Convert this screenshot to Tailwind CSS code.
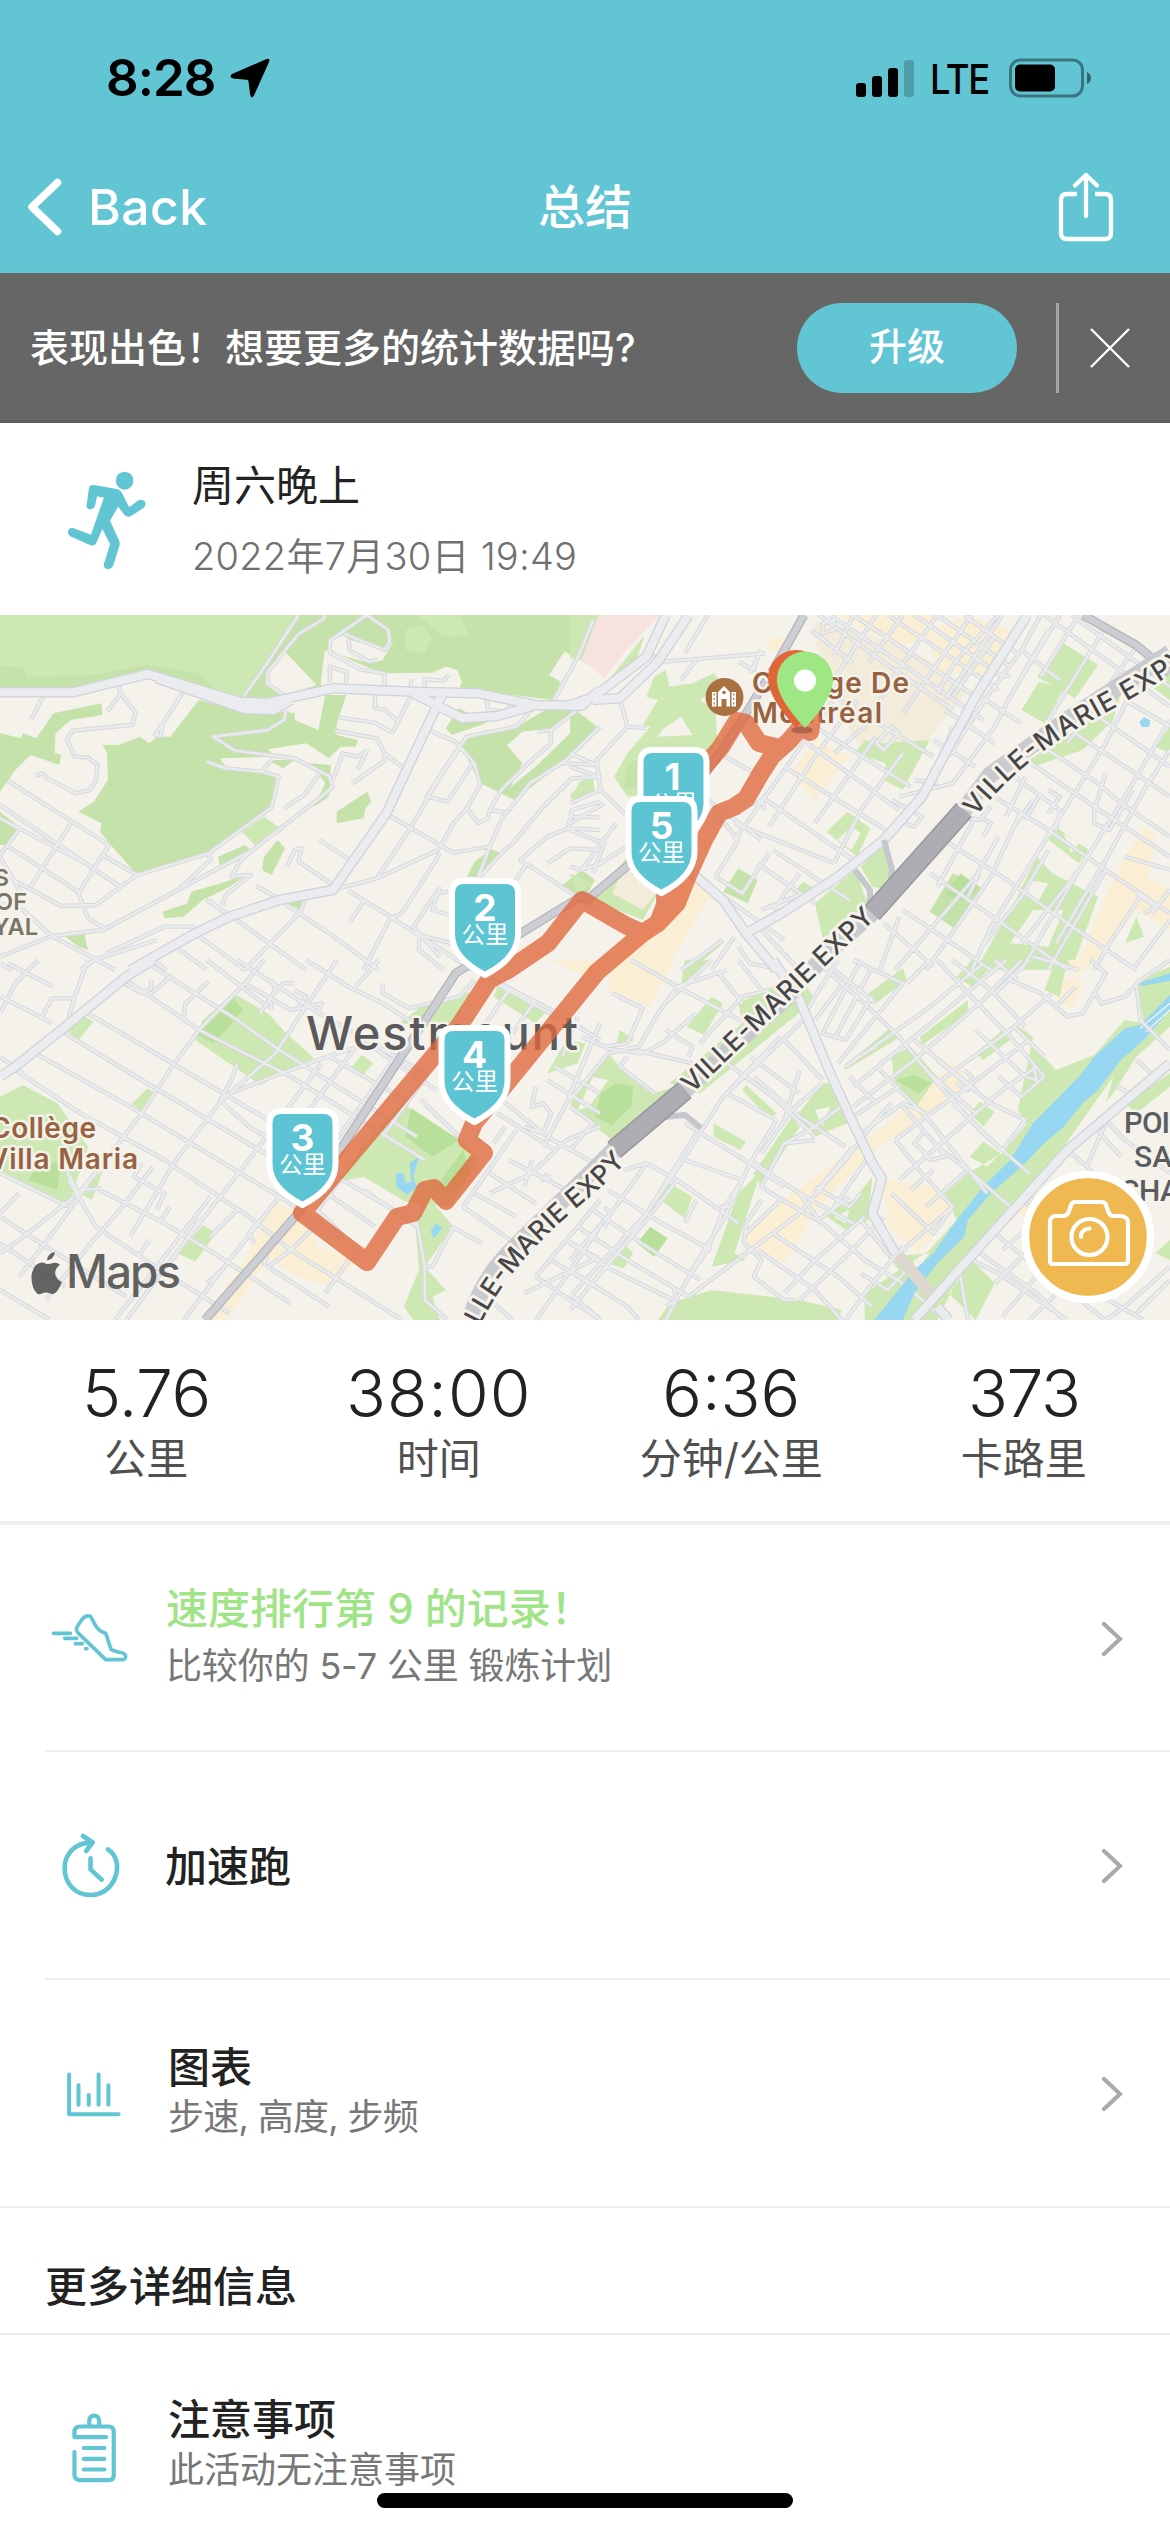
<!DOCTYPE html>
<html lang="zh-CN">
<head>
<meta charset="utf-8">
<meta name="viewport" content="width=1170">
<title>总结</title>
<script src="https://cdn.jsdelivr.net/npm/@tailwindcss/browser@4"></script>
</head>
<body class="w-[1170px] h-[2532px] overflow-hidden bg-white text-[#222] font-['Inter','Noto_Sans_CJK_SC',sans-serif]">
<div class="relative flex flex-col w-[1170px] h-[2532px] overflow-hidden">

<header class="h-[273px] shrink-0 bg-[#62c5d4] flex flex-col">
  <div class="h-[154px] flex items-center justify-between pl-[106px] pr-[78px] pt-[2px] text-black">
    <div class="flex items-center gap-[14px]">
      <span class="text-[51px] leading-[60px] font-semibold tracking-[-1px]">8:28</span>
      <svg class="w-[42px] h-[42px]" viewBox="0 0 42 42"><path d="M37 2.200Q41.500 .500 40 5L25 38.500Q22.600 42.500 21.200 38L19.500 24.500Q19.300 22.800 17.500 22.700L4 21.500Q-.5 20 3 17Z"/></svg>
    </div>
    <div class="flex items-center">
      <svg class="w-[60px] h-[40px]" viewBox="0 0 60 40"><rect x="1" y="25" width="10" height="14" rx="3"/><rect x="17" y="18" width="10" height="21" rx="3"/><rect x="33" y="10" width="10" height="29" rx="3"/><rect x="49" y="2" width="10" height="37" rx="3" opacity=".2"/></svg>
      <span class="ml-[15px] text-[41px] leading-[50px] font-medium tracking-[-1.6px] relative top-[1px] [transform-origin:left] scale-x-[.89] w-[64px]">LTE</span>
      <svg class="ml-[14px] w-[84px] h-[40px]" viewBox="0 0 84 40"><rect x="2.500" y="2" width="72" height="36" rx="10" fill="none" stroke="#000" stroke-opacity=".4" stroke-width="3"/><rect x="7" y="6.500" width="40" height="27" rx="5"/><path d="M79 14Q83 16 83 20T79 26Z" opacity=".5"/></svg>
    </div>
  </div>
  <div class="h-[119px] grid grid-cols-3 items-center text-white pl-[26px] pr-[54px] pb-[14px]">
    <div class="flex items-center gap-[25px]">
      <svg class="w-[37px] h-[60px]" viewBox="0 0 37 60" fill="none" stroke="#fff" stroke-width="7.500" stroke-linecap="round" stroke-linejoin="round"><path d="M31.500 5.500 6 30 31.500 54.500"/></svg>
      <span class="text-[50px] leading-[60px] font-medium tracking-[.4px]">Back</span>
    </div>
    <h1 class="text-center text-[47px] leading-[60px] font-medium pl-[28px]">总结</h1>
    <svg class="justify-self-end w-[60px] h-[72px]" viewBox="0 0 60 72" fill="none" stroke="#fff" stroke-width="4.300" stroke-linecap="round" stroke-linejoin="round"><path d="M21 23H11Q5 23 5 29V62Q5 68 11 68H49Q55 68 55 62V29Q55 23 49 23H39" stroke-linecap="butt"/><path d="M30 45V4M19 14.500 30 4 41 14.500"/></svg>
  </div>
</header>

<section class="h-[150px] shrink-0 bg-[#666] border-b-[3px] border-[#5d5d5d] flex items-center text-white pt-[2px]">
  <p class="ml-[30px] w-[767px] text-[39px] leading-[48px] font-medium whitespace-nowrap">表现出色！想要更多的统计数据吗?</p>
  <button class="w-[220px] h-[90px] rounded-full bg-[#62c5d4] text-[38px] leading-[48px] font-medium pb-[4px]">升级</button>
  <div class="ml-[39px] w-[3px] h-[90px] bg-[#a5a5a5]"></div>
  <svg class="ml-[29px] w-[44px] h-[44px]" viewBox="0 0 44 44" stroke="#fff" stroke-width="2.400"><path d="M3 3 41 41M41 3 3 41"/></svg>
</section>

<section class="h-[192px] shrink-0 flex">
  <svg class="ml-[61px] mt-[37px] w-[92px] h-[120px]" viewBox="160 123 240 360" preserveAspectRatio="none" fill="#62c5d4">
    <ellipse cx="326" cy="185" rx="23" ry="27"/>
    <path d="M236 200Q242 196 250 199L305 210Q315 212 320 224L338 265 362 244Q374 238 380 250 382 260 375 267L342 292Q332 296 326 288L309 263 288 305 312 366Q314 374 312 382L296 440Q288 455 275 448 271 444 272 434L288 376 268 330 252 372Q247 382 237 379L184 352Q174 342 181 330 187 324 197 329L238 347 272 236 254 232 249 260Q242 275 230 269 226 265 227 258L233 208Q234 202 236 200Z"/>
  </svg>
  <div class="ml-[39px] mt-[39px]">
    <h2 class="text-[42px] leading-[48px]">周六晚上</h2>
    <p class="mt-[22px] text-[38px] leading-[48px] font-[340] text-[#707070] tracking-[.25px] whitespace-nowrap">2022年7月30日 19:49</p>
  </div>
</section>

<section class="h-[705px] shrink-0">
<svg class="block w-[1170px] h-[705px]" viewBox="0 0 1170 705">
<defs>
  <g id="streetsA" transform="translate(0 -5) scale(.38265 .33333)">
    <path vector-effect="non-scaling-stroke" d="M780 15 695 165 630 270M850 15 845 28 780 72 700 185 698 220 745 258M958 15 862 92 862 128 940 178 1005 190V232M958 15 1015 60 1018 95 1005 120 900 72M910 88 915 122 965 155 990 150M862 218V170L905 185V220M1072 235 1075 208M1108 235 1110 208 1160 212 1172 195M1550 30 1515 130 1447 272M112 260 82 328M310 225 315 250 280 305M315 250 355 310 345 345 190 362 175 388 195 440 230 442 255 465 250 515 235 540 198 550 120 502 110 490 92 498M478 248 405 375 420 378 425 345M20 512 285 705 268 735 358 795 545 730 710 592 728 500 685 485 590 475 540 455M0 585 320 835M0 625 240 770M185 640 80 830M55 650 0 735M268 735 205 850 230 925 278 958M15 705 155 808 210 850M0 740 60 860M358 795 250 885 160 888 35 810M748 300 742 330 700 360 557 380 615 422 770 445 860 498 870 530 835 565 660 720 270 960 135 978 0 1040M685 485 712 447M835 490 795 555 742 595M870 510 895 430 935 440 960 420M960 420 935 478M1005 430V452L920 520M545 732 550 750 470 835M660 720 630 750 605 800 655 795 590 855 580 888M750 770 770 720 788 715 780 755 865 820M835 690 915 750M670 828 735 870M980 248V295L1005 298 1040 335M885 322 980 338 1025 368M875 362 985 385 1005 430 1055 475M1075 255 1025 370M1010 612 1185 728 1280 710M870 840 985 805 1075 650 1150 500 1198 420M910 842 1020 920 1235 1080M950 875 915 935M730 870 860 970 990 1080M538 870 600 915 800 1080M1125 362 1190 395 1240 460 1255 525 1220 595 1185 640 1145 720 985 805M1220 595 1250 640 1275 625 1280 600 1325 608M1400 285 1350 350 1220 380 1165 470 1115 560 1170 575 1235 460M1520 290 1440 360 1440 400 1380 460 1310 540 1280 600M1405 365 1440 360M1568 350 1480 450 1385 520 1310 630 1280 710 1250 800M1470 460 1568 465M1568 500 1495 505 1420 590 1340 700 1310 730 1255 800M1485 620 1568 622M1568 575 1495 600 1485 650M1568 660 1485 655 1430 680 1360 750 1380 765M1360 750 1568 905M1375 765 1330 840M1568 720 1490 715 1430 760M800 860 785 905 640 1080M600 920 545 870M130 975 250 1048 410 990M135 978 60 900 0 880M250 1048 210 1080M250 1048 300 1080M430 950 510 950M430 950 278 1030M510 970 640 1080M465 1015 540 1080M400 1050 435 1080M1050 910 1150 730M1050 910 1020 925 950 1080M1170 845 1140 850 1080 950 1150 1040M1180 1000 1095 975V1020L1160 1080M1270 265 1275 300 1320 305 1340 280M1150 830 1130 900 1175 915M0 1060 30 1080"/>
  </g>
  <g id="streetsB" transform="translate(570 -5) scale(.38265 .33333)">
    <path vector-effect="non-scaling-stroke" d="M200 125 245 155 410 140 510 130M330 150 290 210M360 15 300 130M440 155 480 180 490 140M500 120 470 190M130 265 150 350 70 450 80 540 160 630M150 350 200 355M0 430 70 465M0 470 75 500M80 540 0 580M90 580 0 640M120 640 30 780 0 770M0 660 90 700 60 790M160 700 80 760 30 780M650 15 800 140 1000 300M680 15 1080 330M740 15 1060 260M830 15 1120 240M900 15 1130 200M960 15 1150 170M1030 15 1170 130M740 15 690 140M800 15 700 190 690 240M870 15 780 160M960 15 840 210 770 350 690 430M1050 15 900 260 870 310M1110 80 1000 260M1130 15 980 270M630 60 740 160M660 40 690 30 690 60 660 70ZM690 260 950 440M640 350 890 530M700 250 560 480 430 690M750 270 640 440 520 650M800 380 640 640M870 430 760 600 690 760M620 400 860 600M560 470 840 670M500 560 740 750M430 640 690 760M350 560 500 690M480 590 500 570 510 600M390 430 500 500M800 400 840 350 860 370 820 420ZM330 800 560 990M390 620 440 690 380 800M520 730 450 850 380 800M600 790 530 900M500 900 610 850M530 720 730 870M490 760 640 880M430 980 370 1080M400 990 290 1080M440 1010 470 1060 560 1080M500 960 600 1080M1230 15 1180 120 1280 210M1180 120 1090 260 1000 420M1280 15 1160 240 1110 350 1000 520 860 560M1060 250 1180 340M980 300 1110 400M950 390 1060 470M900 510 960 520M840 570 920 620 900 650 850 630M1240 15 1568 290M1310 15 1568 230M1000 350 970 450 1010 420M1090 180 1150 200M1250 60 1140 280M1330 15 1230 200M1400 50 1250 330M1480 110 1300 400M1080 540 1250 660 1400 780 1568 910M1180 440 1370 590 1568 740M1150 490 1280 600 1270 660M1250 420 1380 520 1440 580 1568 680M1320 370 1568 560M1380 320 1568 470M1450 270 1568 350M1470 240 1400 400 1270 640 1100 950 1050 1080M1568 330 1450 560 1320 800 1180 1080M1568 420 1500 540 1400 750 1270 1000M1230 550 1190 630M1250 540 1280 560 1250 610M1190 500 1140 620M1210 570 1160 650M1400 490 1370 600 1370 640 1410 660 1470 540M1070 620 1100 640 1080 680M1010 620 1070 630 1100 590M1060 620 960 830M990 700 1130 800 1300 940 1480 1080M940 790 1080 900 1300 1080M870 900 1050 1040 1100 1080M820 940 950 1070M1120 680 1060 800 940 960 850 1080M1180 600 1100 800 980 1000 930 1080M1250 720 1180 860 1070 1020M1330 780 1180 1000M1568 780 1450 740M1480 850 1530 890 1500 910M1490 860 1410 1000 1370 1080M1568 930 1470 1080M1400 780 1250 1080M1210 1040 1330 1080M1070 790 1040 860M1568 840 1520 910M860 920 810 1080M1120 15 1010 150 960 250"/>
  </g>
  <g id="streetsC" transform="translate(0 345) scale(.38265 .33333)">
    <path vector-effect="non-scaling-stroke" d="M100 0 40 70 0 160M20 10 140 80M230 0 195 110 175 190M195 115 135 115 110 170M0 110 80 155 135 190M310 60 370 100 395 85 395 60M395 100 450 45M545 65 485 130 480 175M330 60 520 210 760 350 1110 600M400 20 620 180 730 270 1090 530M230 160 480 330 790 540M170 220 370 360 780 640 980 800M100 285 340 440 730 710 890 830M40 330 210 460 430 600M0 290 60 340M690 0 640 70 520 210 450 320 370 460 250 640 150 800 50 950M540 0 700 140M620 0 820 150 910 210 1110 340M640 70 760 150 840 130 830 160M710 60 720 90 680 160M710 150 705 115 740 70 770 70M770 90 800 110 780 140M800 0 910 80 1000 130 1080 190M880 0 840 70 770 190 720 280 580 420 460 600M620 310 605 360 575 420 650 500 800 600M580 410 690 360 830 300 960 250M960 250 1010 290 1140 390M860 290 1060 420M1000 70 1000 100 1070 145 1200 110 1240 60M990 0 930 80M1040 280 960 410 860 570M1120 340 1000 530M930 260 750 540M840 310 650 600 460 880 330 1080M730 710 600 900 480 1080M400 620 320 740 230 860 120 1020M460 600 340 830M550 710 490 800 410 920 300 1080M370 610 350 650 430 700 410 750M430 600 650 770 760 870 900 970 1050 1080M260 690 430 790 560 880 760 1030M180 660 200 700 250 800 420 930 600 1060M210 690 265 685M160 600 205 700 255 630M205 700 50 840 0 880M0 640 180 740M0 770 120 860 330 1010M0 850 170 980M50 700 0 760M445 740 415 790M520 780 450 900M390 840 360 890M620 750 550 830M680 780 650 820 665 850M740 800 700 870 690 920M760 870 700 920M840 780 760 870M930 870 850 1000M700 920 860 1040M580 930 540 970M880 650 1090 790 1110 920 1110 1020 1170 1080M950 690 1090 800M1185 800 1130 920 1110 920M890 660 830 750 900 830M1240 30 1440 150 1568 240M1280 60 1500 200M1330 90 1270 190M1400 120 1340 220M1400 380 1390 440 1420 430 1440 460 1420 520 1370 500M1290 400 1430 530 1568 620M1300 460 1450 570M1320 500 1290 550M1430 360 1568 460M1450 320 1568 400M1510 170 1470 290M1568 190 1480 430 1420 560M1568 500 1480 540 1390 640 1280 700M1330 600 1480 690M1280 640 1400 730M1240 700 1350 770M1210 740 1370 870M1180 800 1260 850M1350 510 1210 740M1430 640 1420 660 1440 650M1390 600 1370 680M1400 950 1568 1080M1400 950 1568 720M1370 1000 1568 890M1440 900 1568 990M1480 840 1568 900M1310 920 1240 1060M1280 1020 1340 1080M1568 800 1450 1000 1400 1080M1100 420 1200 530M0 990 130 1080"/>
  </g>
  <g id="streetsD" transform="translate(570 345) scale(.38265 .33333)">
    <path vector-effect="non-scaling-stroke" d="M110 100 190 145 150 250 90 260 30 230M90 265 190 280 240 250 330 160M160 0 280 80 230 160 180 260 100 280 0 420M370 0 240 140M410 30 280 80M280 80 460 190M250 210 320 260 310 290M170 270 320 310M150 290 130 320 220 400M340 250 450 110 520 90M390 40 450 130M440 0 500 90M0 440 60 490 0 570M300 490 470 610 560 680M330 520 200 760 0 1010M550 230 400 410 290 610 140 860 50 980M410 310 530 410 640 530M470 290 600 400M560 240 660 360M610 180 510 290 400 410M410 400 540 480M540 480 470 610 410 760 340 890 310 950M660 370 580 450 500 580M480 350 600 470 720 560M600 330 560 480M720 430 640 500 560 550 500 680 540 710M140 630 200 610 280 660 440 790M100 690 240 790 370 870M60 750 200 860 340 960M20 800 150 900 310 1010M0 850 110 930 270 1020M200 610 120 740 0 900M300 600 450 660M280 660 200 780 100 910 0 1050M450 660 400 750 360 870 310 950 250 1080M420 740 390 740M90 740 105 760 90 805M330 720 300 790M0 930 150 1040 180 1080M0 1000 80 1080M270 980 280 1020 250 1040M560 550 640 540M470 600 600 700 740 790M500 720 460 790 455 850 500 900 480 950 560 1020 590 1020M540 710 660 790 770 900 870 970M640 680 730 740 760 700M550 720 460 820M530 820 700 950 790 1040M490 870 640 990 710 1080M840 430 800 480 720 600 600 760 460 880 310 1010M740 560 640 700M780 590 690 740M600 700 650 780 730 710M870 860 790 970 720 1080M820 770 730 880 600 1020M770 770 640 900 560 1000M760 780 830 880 880 930 830 990 760 940M700 0 640 110 610 170M720 60 640 180M760 0 660 220 720 240 790 110M790 20 690 240M640 0 760 120 860 230 960 370 1070 510 1200 640M740 0 870 70 700 310M690 30 800 130M880 70 940 0M960 0 1040 100 1150 230 1240 350M1000 0 1100 90 1190 200M1080 10 930 150 720 320M1140 0 890 240 740 380M1180 0 1080 120 900 300 740 440M1260 100 1150 210 960 370M1200 240 1040 380 930 470 850 540M1220 320 1130 390 980 540 860 660M1240 350 1180 410 1120 350M1160 200 1240 290M1060 210 1190 350M960 300 1100 430 1190 480 1130 570 1000 430M930 330 1060 460M900 240 1060 390M810 330 930 470 1090 700M800 260 740 300M730 350 800 430M740 470 860 380M760 520 870 430 930 460M1010 370 1040 390 1050 350 1030 330M1190 350 1220 360 1210 310M870 440 960 560 1040 630M930 510 900 550 930 580M850 540 920 640 1000 740 950 820 840 700M960 560 980 590 940 600 920 570M1040 630 1160 750 1040 630 930 740M1000 740 860 880M950 630 890 690M1150 60 1230 100 1300 170 1340 160 1390 60M1110 0 1170 60M1200 0 1110 100M1320 80 1270 140M1360 0 1400 40 1370 100 1390 130 1450 110 1490 60M1480 70 1490 180 1568 270M1568 0 1480 70M1430 380 1480 410M1480 300 1520 340 1568 320M1300 570 1370 640M1400 480 1450 540 1568 640M1370 500 1440 590M1520 380 1490 370M1400 490 1350 620M1250 640 1180 720 1300 830 1400 920M1190 700 1270 790M1100 810 1250 950 1400 1080M1060 870 1220 1000 1290 1080M1130 870 1200 800M1050 900 1120 940 1300 1080M1200 870 1110 970M1240 920 1130 1070M1310 960 1200 1080M1020 950 1040 1080M1568 920 1450 1040 1400 1080M1568 960 1480 1060M1390 1010 1500 1080M900 1000 960 1060"/>
  </g>
  <g id="majors">
    <g transform="translate(0 -5) scale(.38265 .33333)"><path vector-effect="non-scaling-stroke" d="M0 247H190L385 192 410 200 625 275 700 278 870 235 1080 245 1250 250 1400 285 1520 287 1568 240M410 205 640 298 715 300 760 270M1080 250 1210 325 1300 318 1400 285M1155 255 1030 560 1010 610 870 840 730 870 600 920 510 970 340 1080"/></g>
    <g transform="translate(570 -5) scale(.38265 .33333)"><path vector-effect="non-scaling-stroke" d="M0 285 60 262 200 140 250 15M60 270 130 265 230 155 310 15M1195 15 1060 260 920 560 820 690 700 800 560 905 460 970 400 870 320 790M460 970 540 1080"/></g>
    <g transform="translate(0 345) scale(.38265 .33333)"><path vector-effect="non-scaling-stroke" d="M400 0 330 50 165 205 40 320 0 350"/></g>
    <g transform="translate(570 345) scale(.38265 .33333)"><path vector-effect="non-scaling-stroke" d="M530 0 600 120 680 340 740 490 790 610 815 655 790 760 850 880M1568 310 1300 570 1000 950 900 1080M960 1040 990 1080"/></g>
  </g>
  <path id="shield" d="M15 3H57Q69 3 69 15V56Q69 80 36 97Q3 80 3 56V15Q3 3 15 3Z" fill="#5cc4d3" stroke="#fff" stroke-width="6"/>
  <path id="expA" d="M976 202C1000 170 1040 135 1080 112S1150 76 1210 32"/>
  <path id="expB" d="M692 479 878 301"/>
  <path id="expC" d="M470 735C484 695 508 659 545 622S598 580 630 542"/>
</defs>
<rect width="1170" height="705" fill="#f4f2ea"/>

<g transform="translate(0 -5) scale(.38265 .33333)">
  <path fill="#cee8b4" d="M0 15H780L700 160 625 270 385 185 190 235H0ZM690 620 740 660 670 710 632 665Z"/>
  <path fill="#c6e2ab" d="M0 165 60 175 70 200 240 195 385 165 520 190 560 235 620 270 385 190 190 230H0ZM770 15H1540L1445 270 1205 235 870 220 700 275 625 265 780 15M520 270 635 305 745 305 770 310 832 360 850 255H905L880 340V375L935 390 930 410 890 410 860 445 800 400 700 418 720 440 575 445 590 470 680 485 728 500 708 590 545 730 355 790 285 700 262 665 265 640 205 605 245 575 282 510 280 430 268 405 310 405 365 380 390 400 412 380 445 380ZM265 280 268 315 185 330 145 370 143 430 160 435 155 465 80 435 40 480 0 545V370L55 385 60 370 95 385 140 310ZM0 605 50 650 15 705H0ZM640 705 660 725 575 770 570 740ZM725 690 745 715 710 795 685 780 690 740ZM650 790 590 815 500 845 490 880 425 905 430 925 480 920 530 870 600 830ZM750 880 800 865 785 900ZM165 975 220 970 230 1020 205 1010ZM960 545 970 575 955 595 950 625 880 640V605ZM700 450 770 450 740 475ZM810 460 865 465 860 560 820 590 850 520ZM1200 295 1270 340 1180 375 1165 355ZM1505 300 1560 350 1480 450 1345 570 1255 520 1205 410 1225 385 1350 350 1440 290ZM1530 510 1555 545 1500 570 1490 555ZM1285 718 1308 730 1250 800H1220L1240 755ZM1520 780 1555 810 1530 860 1465 830Z"/>
  <path fill="#cee8b4" d="M1060 60 1100 45 1130 80 1110 130 1060 120ZM1090 15H1200L1225 75 1160 80Z"/>
  <path fill="#f4f2ea" d="M745 125 700 185 705 225 745 255 828 225ZM848 125 838 225 1200 238 1207 215 1195 180 1165 170 1130 188 1000 190 935 160 860 120ZM860 95 895 75 915 90 1010 118 1030 92 1000 150 965 160 890 135 865 120ZM1475 125 1435 195 1465 215 1510 145ZM1365 365 1325 405 1365 460 1335 530 1400 470 1490 370V320L1440 355ZM810 310 770 310 770 330 832 360Z"/>
  <path fill="#f7e2df" d="M1568 20 1515 150 1568 185Z"/>
</g>
<g transform="translate(570 -5) scale(.38265 .33333)">
  <path fill="#f7e2df" d="M75 15H235L180 80 140 130 90 205 30 145Z"/>
  <path fill="#f3ecda" d="M640 30 800 80 940 150 1040 240 950 370 880 500 760 420 720 340 690 200 640 100Z"/>
  <path fill="#faeed4" d="M700 15H960L940 80 860 110ZM930 60 1050 20 1150 60 1080 200 960 180ZM510 90 560 80 560 130 520 120ZM640 390 730 440 640 570 580 490ZM310 790 370 850 250 1080H80L200 960ZM1500 650 1530 670 1510 800 1568 840V960L1480 900 1440 960 1350 1080H1320L1400 860 1450 740Z"/>
  <path fill="#cee8b4" d="M0 15H75L30 150 0 145ZM195 75 175 145 125 195 105 205ZM250 180 260 230 320 220 375 190 395 215 340 270 380 300 385 400 290 540 150 560 115 500 150 430 210 350 190 345 230 270 200 260 220 200ZM60 500 65 540 0 570 25 515ZM770 390 820 400 940 390 870 540 820 510 825 460 745 430ZM725 605 785 655 750 740 670 665ZM820 700 850 780 840 840 790 830 760 770ZM745 780 785 900 660 985 640 880ZM610 815 650 845 580 850ZM1290 100 1380 165 1320 265 1220 200ZM1225 215 1290 235 1240 340 1180 300ZM1440 250 1420 330 1340 420 1210 470 1200 450 1350 340ZM1270 650 1355 720 1330 760 1250 690ZM1220 740 1260 790 1380 860 1330 1020 1310 1080H1060L1160 880ZM395 985 400 1000 320 1080H290ZM0 790 60 820 20 850ZM330 730 230 850 190 930 60 870 150 740ZM1480 920 1500 980 1450 1000ZM1568 350 1530 410 1568 430ZM1568 180V270L1520 230Z"/>
  <path fill="#c6e2ab" d="M440 775 490 810 465 880 400 845ZM1000 790 1080 835 1010 960 940 905ZM150 460 200 440 210 520 140 540Z"/>
  <path fill="#b9e09b" d="M1020 790 1070 830 1030 870 980 855Z"/>
  <path fill="#f4f2ea" d="M290 320 240 360 230 380 320 375ZM735 650 760 670 735 720 700 690ZM1200 810 1250 820 1220 880 1180 850ZM1290 900 1250 1010 1150 1000 1210 900ZM1290 670 1330 700 1310 730Z"/>
  <path fill="#f3ecda" d="M150 750 260 800 190 900 110 850Z"/>
  <path fill="#97d7f1" d="M1500 322 1516 330 1514 350 1494 352 1488 336Z"/>
</g>
<g transform="translate(0 345) scale(.38265 .33333)">
  <path fill="#faeed4" d="M715 730 790 760 830 860 930 900 870 980 800 960 700 900 590 1080H530L640 900ZM1440 0H1568V50L1530 50Z"/>
  <path fill="#cee8b4" d="M610 100 700 160 740 210 820 295 680 375 510 240 530 180ZM215 165 245 185 205 240 175 210ZM385 385 405 400 370 455 345 430ZM60 375 150 430 230 560 180 735 100 690 0 630V410ZM270 630 240 720 205 700ZM530 795 565 820 510 905 465 880ZM945 285 975 310 945 350 912 330ZM1050 430 1210 545 1250 600 1180 740 1060 725 950 650 885 665 960 540ZM1110 700 1185 800 1110 920 1165 990 1130 1010 1150 1080H1080L1055 1040 1095 930 1085 790ZM1230 95 1100 140 1045 190 1180 210ZM1300 80 1430 150 1400 190 1290 110ZM1480 240 1530 250 1510 310 1430 340ZM1568 350 1490 440 1568 510Z"/>
  <path fill="#b9e09b" d="M610 115 635 150 560 250 515 225ZM1075 445 1200 540 1130 590 1060 530ZM85 640 160 600 150 690 75 660ZM1210 570 1230 640 1170 700 1140 680Z"/>
  <path fill="#97d7f1" d="M1095 590 1080 650 1090 680 1065 705 1035 680V640H1055L1060 670 1075 665 1070 610ZM1140 790 1155 805 1135 835 1125 815Z"/>
</g>
<g transform="translate(570 345) scale(.38265 .33333)">
  <path fill="#faeed4" d="M110 0H270L210 140 100 90ZM1000 310 1030 320 1020 400 800 570 700 680 640 760 560 910 460 850 455 810 560 720 700 600 820 500ZM820 660 960 680 1000 750 910 880 830 800ZM1300 50 1340 70 1310 150 1265 110ZM1300 0H1350L1330 60ZM1150 750 1200 690 1230 700 1190 770Z"/>
  <path fill="#cee8b4" d="M0 430 100 280 130 320 220 400 300 370 110 540 20 460ZM600 40 640 120 340 400 260 370 450 190 440 130ZM370 110 400 130 350 225 305 200ZM130 210 170 240 120 255ZM300 0 370 0 290 80ZM870 25 880 60 800 130 780 100ZM840 200 865 230 720 330 715 320ZM890 260 960 350 905 440 850 380 840 290ZM1050 0H1120L1050 80 1010 50ZM1040 120V160L920 255 915 230ZM1070 425 1110 455 1080 500 1045 460ZM1080 545 1125 580 1090 620 1045 590ZM1130 210 1150 240 1080 300 1060 280ZM1270 0H1300L1280 110 1240 90ZM660 370 690 370 725 490 640 530 590 470ZM580 470 600 500 500 680 480 640ZM375 490 460 545 445 570 375 530ZM460 375 540 460 520 475 450 390ZM260 670 320 710 300 775 230 715ZM500 630 430 880 460 900 370 920 440 700ZM140 850 165 880 140 925 100 910ZM370 990 600 1020 710 1050 700 1080H230L260 1030ZM790 650 780 780 720 810 660 760 740 720ZM770 1000 860 930 830 890 940 880 900 940 810 1080H770ZM1370 285 1270 330 1160 190 1210 230 1170 450 1195 490 1130 580 1040 640 980 700 1010 780 940 870 900 900 860 1080H960L1050 870 1110 790 1160 740 1300 560 1420 400 1480 290 1568 200V20L1480 60 1500 190 1450 180ZM1568 340 1450 430 1480 460 1568 380ZM1050 900 1110 970 1060 1080 990 1000ZM1568 840V900L1530 880Z"/>
  <path fill="#b9e09b" d="M120 370 165 380 160 440 110 495 65 470 80 400ZM210 800 255 835 220 890 175 850ZM850 360 900 345 945 370 910 400Z"/>
  <path fill="#f4f2ea" d="M60 350 100 360 50 440 20 450ZM640 450 680 440 660 500ZM1190 700 1290 560 1370 430 1420 350 1400 430 1310 570 1190 690ZM690 770 730 750 720 790Z"/>
  <path fill="#97d7f1" d="M1568 150 1500 240 1440 300 1380 390 1340 430 1290 500 1230 560 1190 610 1100 700 1040 780 1030 830 960 910 900 1000 870 1080H795L900 930 950 880 1010 780 1080 680 1150 600 1210 490 1330 350 1370 290 1450 205 1490 195 1568 105ZM1485 70 1568 40V62L1495 78Z"/>
  <path stroke="#f4f2ea" stroke-width="4" d="M1490 205 1568 130M1505 215 1568 150"/>
</g>

<g fill="none" stroke-linejoin="round">
  <g stroke="#d6d9dc" stroke-width="4.400"><use href="#streetsA"/><use href="#streetsB"/><use href="#streetsC"/><use href="#streetsD"/></g>
  <g stroke="#e9ebed" stroke-width="2.400"><use href="#streetsA"/><use href="#streetsB"/><use href="#streetsC"/><use href="#streetsD"/></g>
  <use href="#majors" stroke="#cfd2d7" stroke-width="10.500"/>
  <use href="#majors" stroke="#eaecf0" stroke-width="8"/>
  <path d="M804 0 776 50 742 105 662 222 588 284 580 282 456 358 300 596 205 705M1083 0 1136 30 1170 58" stroke="#b4b6bb" stroke-width="9"/>
  <path d="M804 0 776 50 742 105 662 222 588 284 580 282 456 358 300 596 205 705M1083 0 1136 30 1170 58" stroke="#cdced3" stroke-width="6.500"/>
  <path d="M898 640 930 678" stroke="#dcd8cf" stroke-width="12"/>
  <path d="M884 225 892 255 888 285M855 255 870 275 870 300M665 502 685 500 701 513" stroke="#c6c7cc" stroke-width="6"/>
  <path d="M470 705C482 665 500 645 535 612L570 578 614 535 685 475 784 385 830 335 872 298 964 195 990 160 1067 105 1170 38" stroke="#c9cace" stroke-width="17"/>
  <path d="M614 535 685 475M872 298 964 195" stroke="#97989d" stroke-width="21"/>
  <path d="M614 535 685 475M872 298 964 195" stroke="#adadb3" stroke-width="18"/>
</g>

<g font-family="Inter" fill="#464649" stroke="#f4f2ea" stroke-width="6" stroke-linejoin="round" paint-order="stroke" font-size="26.500" font-weight="500">
  <text><textPath href="#expA" textLength="266">VILLE-MARIE EXPY</textPath></text>
  <text><textPath href="#expB" textLength="254">VILLE-MARIE EXPY</textPath></text>
  <text><textPath href="#expC" textLength="248">VILLE-MARIE EXPY</textPath></text>
</g>
<g font-family="Inter" stroke="#f4f2ea" stroke-width="5" stroke-linejoin="round" paint-order="stroke">
  <g fill="#976240" font-size="28" font-weight="600">
    <text x="752" y="78" textLength="157">Collège De</text>
    <text x="752" y="108" textLength="130">Montréal</text>
    <text x="96" y="523" text-anchor="end" textLength="106">Collège</text>
    <text x="138" y="554" text-anchor="end" textLength="150">Villa Maria</text>
  </g>
  <g fill="#7a7666" font-size="23.500" font-weight="600" text-anchor="end">
    <text x="9" y="271">S</text><text x="27" y="295">OF</text><text x="38" y="320">YAL</text>
  </g>
  <text x="306" y="435" font-size="47" font-weight="500" fill="#5a5a5c" textLength="272">Westmount</text>
  <g fill="#5b5c5f" font-family="Roboto" font-size="30" font-weight="500">
    <text x="1124" y="518" textLength="46">POI</text><text x="1134" y="552">SA</text><text x="1120" y="586" textLength="60">CHA</text>
  </g>
</g>
<circle cx="724.500" cy="82" r="19" fill="#a9713f"/>
<path fill="#fff" d="M712 77h4.500v14.500H712zM731.500 77h4.500v14.500h-4.500zM718 91.500V77l6-6 6 6v14.500h-3.500V84h-5v7.500z"/><path stroke="#a9713f" stroke-width="1.200" stroke-dasharray="2 2.500" d="M714.200 78.500V91M733.700 78.500V91"/><circle cx="724" cy="77.500" r="1.800" fill="#a9713f"/>

<g opacity=".78" fill="none" stroke="#e0683c" stroke-width="18" stroke-linejoin="round" stroke-linecap="round">
  <path d="M812 105 810 117 800 113 789 126 772 141 761 158 746 184 734 192 719 198 704 225 689 258 677 288 658 308 643 318 597 357 474 508 467 525 484 538 446 586 434 573 425 575 413 598 397 602 367 647 302 598 459 411 489 365 508 355 548 328 582 285 627 311 643 318 658 308 665 290 668 180 704 152 721 132 737 106 746 108 759 128 776 132"/>
</g>

<text x="66" y="673" font-family="Inter" font-size="46" font-weight="500" fill="#4e4e4e" fill-opacity=".88" textLength="115">Maps</text>
<path fill="#4e4e4e" fill-opacity=".88" d="M55 637q-1 7-8 8.500 0-7 8-8.500ZM60 650q-6 4-4.500 10 1.500 5 6.500 7-5 12-9 12-2 0-5-1.300-3-.8-6 .8-3 1.300-5 0-6-6-5.500-18 2-12 10-13 2 0 4.500 1.200 2 .8 5-.2 6-2 9 1.500Z"/>

<g>
  <ellipse cx="802" cy="115" rx="11" ry="3.500" fill="#8c4f3c" opacity=".6"/>
  <path fill="#df6637" d="M796 35a28 28 0 0 1 28 29q0 18-28 49-28-31-28-49a28 28 0 0 1 28-29Z"/>
  <path fill="#9fe785" d="M805 36.500a28 28 0 0 1 28 29q0 18-28 47.500-28-29.500-28-47.500a28 28 0 0 1 28-29Z"/>
  <circle cx="805" cy="65.500" r="11" fill="#fff"/>
</g>
<g fill="#fff" text-anchor="middle" font-family="Inter,'Noto Sans CJK SC',sans-serif">
  <g transform="translate(637.500 132)"><use href="#shield"/><text x="35" y="43" font-size="37" font-weight="700">1</text><text x="36" y="65" font-size="23.500">公里</text></g>
  <g transform="translate(625.500 181)"><use href="#shield"/><text x="36" y="43" font-size="37" font-weight="700">5</text><text x="36" y="65" font-size="23.500">公里</text></g>
  <g transform="translate(449 263)"><use href="#shield"/><text x="36" y="43" font-size="37" font-weight="700">2</text><text x="36" y="65" font-size="23.500">公里</text></g>
  <g transform="translate(266.500 493)"><use href="#shield"/><text x="36" y="43" font-size="37" font-weight="700">3</text><text x="36" y="65" font-size="23.500">公里</text></g>
  <g transform="translate(438.500 410)"><use href="#shield"/><text x="36" y="43" font-size="37" font-weight="700">4</text><text x="36" y="65" font-size="23.500">公里</text></g>
</g>
<circle cx="1088" cy="622" r="62.500" fill="#f0b850" stroke="#fff" stroke-width="7.500"/>
<g fill="none" stroke="#fff" stroke-width="4.200" stroke-linejoin="round" stroke-linecap="round">
  <path d="M1055 601h9q4-1 5-5l2-6q1-3 4-3h27q3 0 4 3l2 6q1 4 5 5h8q7 1 7 6v39q0 3-3 3h-72q-3 0-3-3v-39q0-5 5-6Z"/>
  <circle cx="1089.500" cy="622" r="18"/><path d="M1081 622q0-8 8.500-8.500"/>
</g>
</svg>
</section>

<section class="h-[205px] shrink-0 grid grid-cols-4 border-b-[4px] border-[#efefef] text-center">
  <div class="pt-[37px]"><p class="text-[66px] leading-[72px] font-[340] tracking-[-.5px]">5.76</p><p class="mt-[6px] text-[42px] leading-[48px] text-[#505050]">公里</p></div>
  <div class="pt-[37px]"><p class="text-[66px] leading-[72px] font-[340] tracking-[1px]">38:00</p><p class="mt-[6px] text-[42px] leading-[48px] text-[#505050]">时间</p></div>
  <div class="pt-[37px]"><p class="text-[66px] leading-[72px] font-[340]">6:36</p><p class="mt-[6px] text-[42px] leading-[48px] text-[#505050]">分钟/公里</p></div>
  <div class="pt-[37px]"><p class="text-[66px] leading-[72px] font-[340] tracking-[-1.500px]">373</p><p class="mt-[6px] text-[42px] leading-[48px] text-[#505050]">卡路里</p></div>
</section>

<ul class="shrink-0">
  <li class="h-[227px] ml-[45px] border-b-[2px] border-[#ececec] flex items-center pr-[47px]">
    <svg class="w-[90px] h-[66px] relative top-[1px]" viewBox="100 200 201.600 198" preserveAspectRatio="none" fill="none" stroke="#62c5d4" stroke-width="3.600" stroke-linecap="round" stroke-linejoin="round">
      <path vector-effect="non-scaling-stroke" d="M183 240Q192 226 202 231L212 256Q220 276 236 282L248 330Q256 337 272 340 284 346 280 357L276 361H236L175 282Q168 270 172 262ZM119 282H157M144 297H171M168 313H184M191 328H194"/>
    </svg>
    <div class="ml-[31px] grow pb-px">
      <h3 class="text-[42px] leading-[54px] font-medium text-[#9fe487]">速度排行第 9 的记录！</h3>
      <p class="mt-[3px] text-[36px] leading-[54px] text-[#777] tracking-[-.15px]">比较你的 5-7 公里 锻炼计划</p>
    </div>
    <svg class="w-[22px] h-[38px] relative top-[1px]" viewBox="0 0 22 38" fill="none" stroke="#aaa" stroke-width="4.200" stroke-linecap="round"><path d="M3 4 19 19 3 34"/></svg>
  </li>
  <li class="h-[228px] ml-[45px] border-b-[2px] border-[#ececec] flex items-center pr-[47px]">
    <svg class="w-[90px] h-[66px]" viewBox="100 878 201.600 198" preserveAspectRatio="none" fill="none" stroke="#62c5d4" stroke-width="4.600" stroke-linecap="round" stroke-linejoin="round">
      <path vector-effect="non-scaling-stroke" d="M241 930C258 945 263 970 261 995 256 1035 235 1067 202 1067 166 1067 144 1030 144 985 144 945 168 908 205 910M185 890 207 909 192 935M202 957V990L227 1021"/>
    </svg>
    <h3 class="ml-[30px] grow pt-[3px] text-[42px] leading-[54px] font-medium">加速跑</h3>
    <svg class="w-[22px] h-[38px] relative top-[1px]" viewBox="0 0 22 38" fill="none" stroke="#aaa" stroke-width="4.200" stroke-linecap="round"><path d="M3 4 19 19 3 34"/></svg>
  </li>
  <li class="h-[228px] border-b-[2px] border-[#ececec] flex items-center pl-[45px] pr-[47px]">
    <svg class="w-[90px] h-[66px] relative top-[1px]" viewBox="100 320 201.600 175" preserveAspectRatio="none" fill="none" stroke="#62c5d4" stroke-width="4" stroke-linecap="round" stroke-linejoin="round">
      <path vector-effect="non-scaling-stroke" d="M154 356V461H265M175 384V436M198 410V436M220 356V436M242 384V436"/>
    </svg>
    <div class="ml-[33px] grow pb-[2px]">
      <h3 class="text-[42px] leading-[50px] font-medium">图表</h3>
      <p class="text-[36px] leading-[48px] text-[#777] tracking-[-.7px]">步速, 高度, 步频</p>
    </div>
    <svg class="w-[22px] h-[38px] relative top-[1px]" viewBox="0 0 22 38" fill="none" stroke="#aaa" stroke-width="4.200" stroke-linecap="round"><path d="M3 4 19 19 3 34"/></svg>
  </li>
</ul>

<section class="grow">
  <div class="h-[127px] border-b-[2px] border-[#ececec] pl-[45px] pt-[52px]"><h2 class="text-[42px] leading-[54px] font-medium">更多详细信息</h2></div>
  <div class="flex pl-[45px] pt-[58px]">
    <svg class="w-[90px] h-[80px] mt-[15px]" viewBox="100 1242 201.600 212" preserveAspectRatio="none" fill="none" stroke="#62c5d4" stroke-width="4.200" stroke-linecap="round" stroke-linejoin="round">
      <path vector-effect="non-scaling-stroke" d="M166 1359V1422Q168 1433 178 1433H242Q254 1433 254 1420V1305Q254 1292 244 1291H178Q166 1292 166 1305V1319H237M200 1290Q196 1262 210 1262T221 1290M187 1348H233M187 1377H233M187 1405H233"/>
    </svg>
    <div class="ml-[33px]">
      <h3 class="text-[42px] leading-[54px] font-medium">注意事项</h3>
      <p class="text-[36px] leading-[46px] text-[#777]">此活动无注意事项</p>
    </div>
  </div>
</section>
<div class="absolute left-[377px] top-[2493px] w-[416px] h-[15px] rounded-full bg-black"></div>
</div>
</body>
</html>
